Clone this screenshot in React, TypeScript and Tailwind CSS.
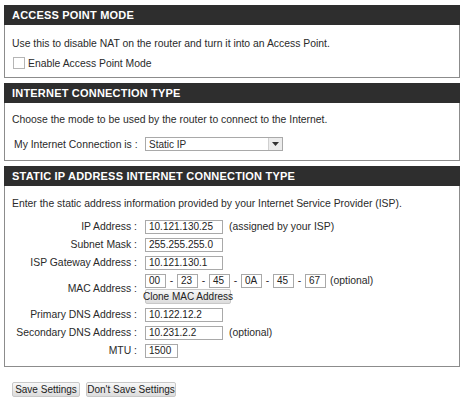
import React from 'react';

const font = { fontFamily: '"Liberation Sans", Arial, sans-serif' };

const Header = ({ title }: { title: string }) => (
  <div className="h-[20px] bg-[#2e2e2e] text-white font-bold text-[11px] tracking-[0.2px] pl-[8px] flex items-center whitespace-nowrap">
    {title}
  </div>
);

const Field = ({ value, w = 'w-[78px]' }: { value: string; w?: string }) => (
  <div className={`${w} h-[14px] border border-[#a9a9a9] bg-white text-[10px] leading-[12px] pl-[3px] text-[#222] whitespace-nowrap overflow-hidden`}>
    {value}
  </div>
);

const Row = ({ label, children }: { label: string; children: React.ReactNode }) => (
  <div className="flex items-center h-[18px]">
    <div className="w-[137px] text-right pr-[8px] shrink-0 whitespace-nowrap">{label} :</div>
    <div className="flex items-center whitespace-nowrap">{children}</div>
  </div>
);

const GrayButton = ({ label, className = '' }: { label: string; className?: string }) => (
  <div
    className={`h-[15px] flex items-center justify-center whitespace-nowrap border border-[#c8c8c8] bg-gradient-to-b from-[#f8f8f8] to-[#dcdcdc] text-[10px] text-[#222] rounded-[2px] ${className}`}
  >
    {label}
  </div>
);

export default function App() {
  const mac = ['00', '23', '45', '0A', '45', '67'];
  return (
    <div className="w-[466px] h-[410px] bg-white text-[10.4px] text-[#2a2a2a] pt-[5px] pl-[4px]" style={font}>
      <div className="w-[456px] flex flex-col gap-[5px]">
        {/* Access point */}
        <div>
          <Header title="ACCESS POINT MODE" />
          <div className="h-[53px] border border-t-0 border-[#8c8c8c] pl-[7px] pt-[11px]">
            <div>Use this to disable NAT on the router and turn it into an Access Point.</div>
            <div className="flex items-center mt-[4px]">
              <div className="w-[12px] h-[12px] border border-[#b5b5b5] bg-white mr-[3px] ml-[1px]" />
              <span>Enable Access Point Mode</span>
            </div>
          </div>
        </div>

        {/* Internet connection type */}
        <div>
          <Header title="INTERNET CONNECTION TYPE" />
          <div className="h-[58px] border border-t-0 border-[#8c8c8c] pl-[7px] pt-[9px]">
            <div>Choose the mode to be used by the router to connect to the Internet.</div>
            <div className="flex items-center mt-[9px]">
              <span className="pl-[2px] w-[133px] whitespace-nowrap">My Internet Connection is :</span>
              <div className="w-[138px] h-[14px] border border-[#a9a9a9] flex items-center justify-between text-[10px] pl-[3px]">
                <span>Static IP</span>
                <div className="w-[14px] h-[12px] flex items-center justify-center bg-[#ececec] border-l border-[#d0d0d0]">
                  <svg width="7" height="4" viewBox="0 0 7 4"><path d="M0 0h7L3.5 4z" fill="#333" /></svg>
                </div>
              </div>
            </div>
          </div>
        </div>

        {/* Static IP */}
        <div>
          <Header title="STATIC IP ADDRESS INTERNET CONNECTION TYPE" />
          <div className="h-[181px] border border-t-0 border-[#8c8c8c] pl-[3px] pt-[10px]">
            <div className="pl-[4px] whitespace-nowrap">Enter the static address information provided by your Internet Service Provider (ISP).</div>
            <div className="mt-[6px] flex flex-col">
              <Row label="IP Address">
                <Field value="10.121.130.25" />
                <span className="ml-[6px]">(assigned by your ISP)</span>
              </Row>
              <Row label="Subnet Mask">
                <Field value="255.255.255.0" />
              </Row>
              <Row label="ISP Gateway Address">
                <Field value="10.121.130.1" />
              </Row>
              <div className="flex items-center h-[34px]">
                <div className="w-[137px] text-right pr-[8px] shrink-0 whitespace-nowrap">MAC Address :</div>
                <div className="flex flex-col gap-[1px]">
                  <div className="flex items-center whitespace-nowrap">
                    {mac.map((m, i) => (
                      <React.Fragment key={i}>
                        {i > 0 && <span className="w-[11px] text-center">-</span>}
                        <Field value={m} w="w-[21px]" />
                      </React.Fragment>
                    ))}
                    <span className="ml-[4px]">(optional)</span>
                  </div>
                  <GrayButton label="Clone MAC Address" className="w-[86px]" />
                </div>
              </div>
              <Row label="Primary DNS Address">
                <Field value="10.122.12.2" />
              </Row>
              <Row label="Secondary DNS Address">
                <Field value="10.231.2.2" />
                <span className="ml-[6px]">(optional)</span>
              </Row>
              <Row label="MTU">
                <Field value="1500" w="w-[33px]" />
              </Row>
            </div>
          </div>
        </div>
      </div>

      <div className="flex gap-[6px] mt-[15px] pl-[8px]">
        <GrayButton label="Save Settings" className="w-[68px]" />
        <GrayButton label="Don't Save Settings" className="w-[90px]" />
      </div>
    </div>
  );
}
